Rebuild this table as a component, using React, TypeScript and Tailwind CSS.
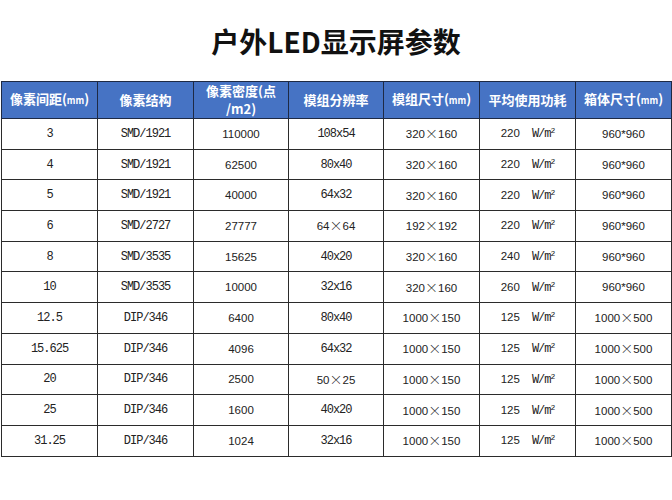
const rows: [string, string, string, string, string, string, string][] = [
  ['3', 'SMD/1921', '110000', '108x54', '320×160', '220', '960*960'],
  ['4', 'SMD/1921', '62500', '80x40', '320×160', '220', '960*960'],
  ['5', 'SMD/1921', '40000', '64x32', '320×160', '220', '960*960'],
  ['6', 'SMD/2727', '27777', '64×64', '192×192', '220', '960*960'],
  ['8', 'SMD/3535', '15625', '40x20', '320×160', '240', '960*960'],
  ['10', 'SMD/3535', '10000', '32x16', '320×160', '260', '960*960'],
  ['12.5', 'DIP/346', '6400', '80x40', '1000×150', '125', '1000×500'],
  ['15.625', 'DIP/346', '4096', '64x32', '1000×150', '125', '1000×500'],
  ['20', 'DIP/346', '2500', '50×25', '1000×150', '125', '1000×500'],
  ['25', 'DIP/346', '1600', '40x20', '1000×150', '125', '1000×500'],
  ['31.25', 'DIP/346', '1024', '32x16', '1000×150', '125', '1000×500'],
]

const mono = "font-['Liberation_Mono',monospace] text-[12px] tracking-[-1px]"
const sans = "font-['Liberation_Sans',sans-serif] text-[11.5px]"

// 把 "320×160" 里的乘号画成宋体那种宽细的样子
function Dim({ text }: { text: string }) {
  const parts = text.split('×')
  if (parts.length === 1) return <>{text}</>
  return (
    <>
      {parts[0]}
      <span className="inline-block w-[13px] text-center font-['Noto_Sans_CJK_SC',sans-serif] font-light text-[13px] leading-none">
        ×
      </span>
      {parts[1]}
    </>
  )
}

function Mm() {
  return (
    <>
      (<span className="text-[9px]">mm</span>)
    </>
  )
}

const th =
  'border border-[#1e2a44] bg-[#4673c4] text-white font-bold text-[13px] text-center align-middle px-0 leading-[16px]'
const td = 'border border-[#2b2b2b] text-center align-middle text-[#222] px-0 leading-[14px]'

export default function App() {
  return (
    <div className="w-[672px] h-[500px] bg-white pt-[21px] font-['Noto_Sans_CJK_SC',sans-serif]">
      <h1 className="h-[40px] leading-[40px] text-center text-[28px] font-bold text-[#111] font-['Noto_Sans_CJK_SC',sans-serif]">
        户外LED显示屏参数
      </h1>

      <table className="mt-[20px] ml-[1px] w-[670px] table-fixed border-collapse">
        <colgroup>
          <col className="w-[96px]" />
          <col className="w-[96px]" />
          <col className="w-[95px]" />
          <col className="w-[95px]" />
          <col className="w-[96px]" />
          <col className="w-[96px]" />
          <col className="w-[96px]" />
        </colgroup>
        <thead>
          <tr className="h-[37px]">
            <th className={th}>
              像素间距<Mm />
            </th>
            <th className={th}>像素结构</th>
            <th className={th}>
              <div className="flex flex-col items-center">
                <span className="h-[18px] leading-[18px]">像素密度(点</span>
                <span className="h-[18px] leading-[18px]">/m2)</span>
              </div>
            </th>
            <th className={th}>模组分辨率</th>
            <th className={th}>
              模组尺寸<Mm />
            </th>
            <th className={th}>平均使用功耗</th>
            <th className={th}>
              箱体尺寸<Mm />
            </th>
          </tr>
        </thead>
        <tbody>
          {rows.map((r, i) => (
            <tr key={i} className="h-[30.7px]">
              <td className={`${td} ${mono}`}>{r[0]}</td>
              <td className={`${td} ${mono}`}>{r[1]}</td>
              <td className={`${td} ${sans}`}>{r[2]}</td>
              <td className={`${td} ${r[3].includes('×') ? sans : mono}`}>
                <Dim text={r[3]} />
              </td>
              <td className={`${td} ${sans}`}>
                <Dim text={r[4]} />
              </td>
              <td className={td}>
                <div className="flex items-baseline justify-center">
                  <span className={sans}>{r[5]}</span>
                  <span className={`${mono} ml-[12px]`}>
                    W/m<span className="relative -top-[4px] text-[8px] leading-none">2</span>
                  </span>
                </div>
              </td>
              <td className={`${td} ${sans}`}>
                <Dim text={r[6]} />
              </td>
            </tr>
          ))}
        </tbody>
      </table>
    </div>
  )
}
